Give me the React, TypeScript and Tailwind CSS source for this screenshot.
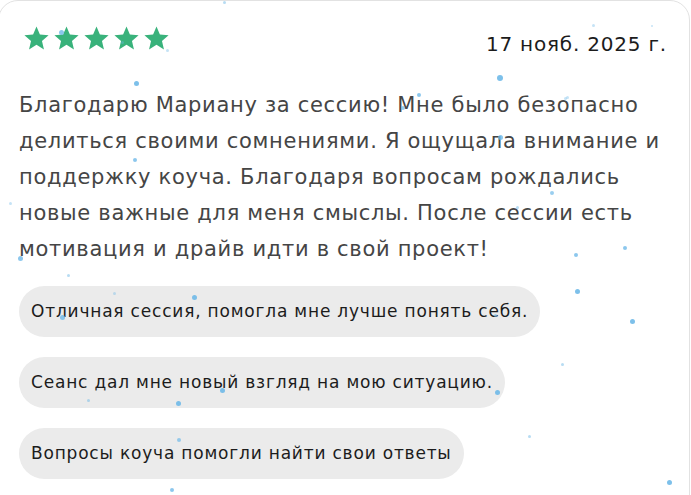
import React from 'react';

const dots: [number, number, number, number][] = [
  [61, 32, 5, 0.8], [136, 83, 5, 0.9], [122, 42, 3, 0.4], [167, 50, 3, 0.4], [224, 2, 3, 0.5],
  [500, 78, 6, 0.9], [593, 25, 3, 0.4], [652, 26, 2, 0.4], [565, 98, 3, 0.4],
  [419, 95, 4, 0.8], [403, 108, 4, 0.7], [500, 137, 5, 0.8], [552, 193, 4, 0.7], [517, 207, 3, 0.5],
  [576, 255, 4, 0.8], [625, 248, 4, 0.8], [567, 97, 3, 0.4],
  [135, 160, 4, 0.8], [20, 258, 5, 0.8], [10, 203, 3, 0.4],
  [194, 297, 5, 0.9], [62, 317, 5, 0.8], [222, 390, 5, 0.9], [178, 403, 5, 0.9], [179, 440, 4, 0.7],
  [172, 490, 4, 0.8], [68, 275, 3, 0.5], [114, 293, 3, 0.4], [88, 400, 3, 0.5],
  [577, 291, 5, 0.9], [632, 321, 5, 0.9], [497, 392, 5, 0.9], [669, 482, 5, 0.9], [495, 315, 3, 0.6],
  [562, 364, 3, 0.5], [529, 436, 3, 0.5],
];

const chips = [
  'Отличная сессия, помогла мне лучше понять себя.',
  'Сеанс дал мне новый взгляд на мою ситуацию.',
  'Вопросы коуча помогли найти свои ответы',
];

function Star() {
  return (
    <svg viewBox="0 0 24 24" className="w-[29px] h-[29px]" fill="#39b27b">
      <path d="M12 17.27L18.18 21l-1.64-7.03L22 9.24l-7.19-.61L12 2 9.19 8.63 2 9.24l5.46 4.73L5.82 21z" />
    </svg>
  );
}

export default function App() {
  return (
    <div className="relative w-[691px] h-[495px] overflow-hidden bg-white" style={{ fontFamily: '"DejaVu Sans", sans-serif' }}>
      <div className="ml-[-2px] w-[692px] h-[520px] rounded-[20px] border border-[#e2e2e2] pl-[20px] pr-[22px] pt-[26px]">
        <div className="flex items-start justify-between">
          <div className="flex gap-[1px] ml-[3px] mt-[-3px]">
            <Star />
            <Star />
            <Star />
            <Star />
            <Star />
          </div>
          <span className="mt-[3px] text-[20px] leading-[28px] tracking-[0.8px] text-[#1c1c1c]">17 нояб. 2025 г.</span>
        </div>
        <p className="mt-[29px] w-full text-[21px] tracking-[0.7px] leading-[36px] text-[#454545]">
          Благодарю Мариану за сессию! Мне было безопасно делиться своими сомнениями. Я ощущала внимание и поддержку коуча. Благодаря вопросам рождались новые важные для меня смыслы. После сессии есть мотивация и драйв идти в свой проект!
        </p>
        <div className="mt-[19px] flex flex-col items-start gap-[20px]">
          {chips.map(c => (
            <div key={c} className="h-[51px] flex items-center rounded-full bg-[#ebebeb] px-[12px] text-[17px] tracking-[0.8px] text-[#1c1c1c]">
              {c}
            </div>
          ))}
        </div>
      </div>
      {dots.map(([x, y, s, o], i) => (
        <span
          key={i}
          className="absolute rounded-full bg-[#6fb9e8] pointer-events-none"
          style={{ left: x - s / 2, top: y - s / 2, width: s, height: s, opacity: o }}
        />
      ))}
    </div>
  );
}
